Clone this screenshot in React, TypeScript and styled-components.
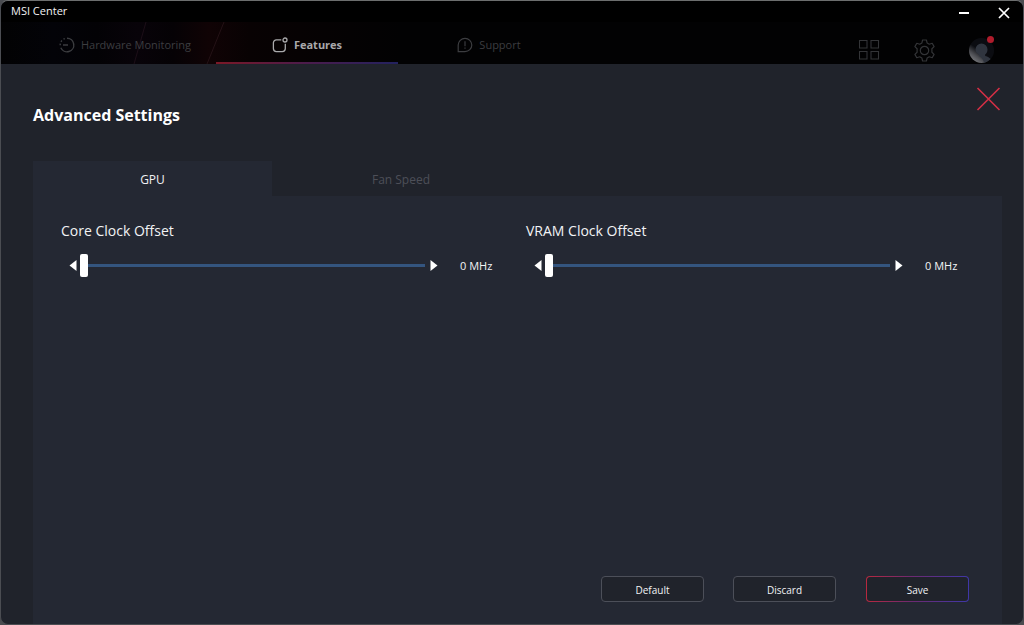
import React, { useState } from "react";
import styled, { createGlobalStyle, css } from "styled-components";

const GlobalStyle = createGlobalStyle`
  *, *::before, *::after { box-sizing: border-box; }
  body { margin: 0; background: #4a4c50; }
  button, input { font: inherit; color: inherit; margin: 0; }
  button { padding: 0; border: 0; background: none; cursor: pointer; }
  svg { display: block; flex: none; }
`;

const Window = styled.div`
  display: flex;
  flex-direction: column;
  min-height: 100vh;
  overflow: hidden;
  border: 1px solid #4b4d52;
  border-top-color: #6c6e6e;
  border-radius: 8px;
  background: #20232b;
  color: #f2f3f5;
  font-family: "Open Sans", "Noto Sans", sans-serif;
  font-size: 11px;
`;

const TitleBar = styled.header`
  display: flex;
  align-items: center;
  justify-content: space-between;
  height: 21px;
  padding: 0 13px 0 10px;
  background: #000;
`;

const AppName = styled.span`
  font-size: 11px;
  line-height: 18px;
  padding-bottom: 2px;
`;

const WindowControls = styled.div`
  display: flex;
  align-items: flex-end;
  gap: 28px;
  padding-top: 3px;
`;

const NavBar = styled.nav`
  position: relative;
  display: flex;
  align-items: stretch;
  justify-content: space-between;
  height: 42px;
  padding: 0 29px 0 33px;
  background: #020203;
`;

const Streaks = styled.svg`
  position: absolute;
  left: 0;
  top: 0;
`;

const NavTabs = styled.div`
  position: relative;
  display: flex;
`;

const NavLink = styled.a<{ $active?: boolean }>`
  display: flex;
  align-items: center;
  justify-content: center;
  gap: 6px;
  width: 182px;
  padding-top: 5px;
  border-bottom: 2px solid transparent;
  color: #3c3d40;
  font-size: 11px;
  line-height: 16px;
  text-decoration: none;
  ${(p) =>
    p.$active &&
    css`
      color: #a9a9ab;
      font-weight: 700;
      border-image: linear-gradient(90deg, #7c1826, #4b1c4c 50%, #22225f) 1;
    `}
`;

const NavTools = styled.div`
  display: flex;
  align-items: center;
  gap: 33px;
  padding-top: 15px;
  color: #333437;
`;

const ToolButton = styled.button`
  position: relative;
`;

const Badge = styled.span`
  position: absolute;
  top: -2px;
  right: 0;
  width: 7px;
  height: 7px;
  border-radius: 50%;
  background: #b01c2c;
`;

const Page = styled.main`
  display: flex;
  flex: 1;
  flex-direction: column;
  padding: 23px 21px 0 32px;
`;

const PageHead = styled.div`
  display: flex;
  align-items: flex-start;
  justify-content: space-between;
  height: 74px;
`;

const Heading = styled.h1`
  margin: 16px 0 0;
  font-size: 16px;
  line-height: 24px;
  font-weight: 700;
  color: #fff;
`;

const Tabs = styled.div`
  display: flex;
`;

const Tab = styled.button<{ $active: boolean; $width: number }>`
  width: ${(p) => p.$width}px;
  height: 35px;
  padding-top: 2px;
  background: ${(p) => (p.$active ? "#242833" : "transparent")};
  color: ${(p) => (p.$active ? "#f0f1f3" : "#4d4f58")};
  font-size: 12px;
`;

const Panel = styled.section`
  display: flex;
  flex: 1;
  flex-direction: column;
  justify-content: space-between;
  padding: 24px 11px 22px 28px;
  background: #242833;
`;

const Settings = styled.div`
  display: grid;
  grid-template-columns: 1fr 1fr;
`;

const SettingLabel = styled.label`
  display: block;
  font-size: 14px;
  line-height: 22px;
`;

const SliderRow = styled.div`
  display: flex;
  align-items: center;
  height: 23px;
  margin-top: 12px;
  padding-left: 8px;
`;

const StepButton = styled.button`
  color: #fff;
`;

const Range = styled.input`
  flex: 1;
  min-width: 0;
  height: 23px;
  margin: 0 5px 0 3px;
  appearance: none;
  background: transparent;

  &::-webkit-slider-runnable-track {
    height: 3px;
    background: #34557f;
  }
  &::-webkit-slider-thumb {
    appearance: none;
    width: 8px;
    height: 23px;
    margin-top: -10px;
    border-radius: 2px;
    background: #fff;
  }
`;

const Value = styled.output`
  width: 66px;
  margin-left: 22px;
  font-size: 11px;
  line-height: 15px;
`;

const Actions = styled.div`
  display: flex;
  justify-content: flex-end;
  gap: 29px;
  padding-right: 22px;
`;

const ActionButton = styled.button<{ $primary?: boolean }>`
  width: 103px;
  height: 26px;
  padding-top: 2px;
  border: 1px solid #4c4f59;
  border-radius: 4px;
  background: #20232b;
  font-size: 10px;
  ${(p) =>
    p.$primary &&
    css`
      margin-left: 1px;
      border-color: transparent;
      background:
        linear-gradient(#20232b, #20232b) padding-box,
        linear-gradient(90deg, #b8283f, #6c2a72 45%, #3f37a8) border-box;
    `}
`;

const Arrow = ({ left }: { left?: boolean }) => (
  <svg width="8" height="11" viewBox="0 0 8 11" fill="currentColor">
    <path d={left ? "M7.5 0v11L.5 5.500z" : "M.5 0v11l7-5.500z"} />
  </svg>
);

function OffsetSetting({ id, label }: { id: string; label: string }) {
  const [value, setValue] = useState(0);
  const step = (d: number) => setValue((v) => Math.min(200, Math.max(0, v + d)));
  return (
    <div>
      <SettingLabel htmlFor={id}>{label}</SettingLabel>
      <SliderRow>
        <StepButton type="button" aria-label={`Decrease ${label}`} onClick={() => step(-1)}>
          <Arrow left />
        </StepButton>
        <Range
          id={id}
          type="range"
          min={0}
          max={200}
          value={value}
          onChange={(e) => setValue(Number(e.target.value))}
        />
        <StepButton type="button" aria-label={`Increase ${label}`} onClick={() => step(1)}>
          <Arrow />
        </StepButton>
        <Value htmlFor={id}>{value} MHz</Value>
      </SliderRow>
    </div>
  );
}

const GaugeIcon = () => (
  <svg width="16" height="16" viewBox="0 0 16 16" fill="none" stroke="currentColor" strokeWidth="1.4">
    <path d="M8 1.200A6.800 6.800 0 1 1 1.800 10.800" />
    <path d="M1.200 8.200A6.800 6.800 0 0 1 6 1.500" strokeDasharray="1.500 2" />
    <path d="M4 8H9" />
  </svg>
);

const FeaturesIcon = () => (
  <svg width="16" height="16" viewBox="0 0 16 16" fill="none" stroke="currentColor" strokeWidth="1.3">
    <path d="M9.300 2.800H4.400a3 3 0 0 0-3 3v5.800a3 3 0 0 0 3 3h5.900a3 3 0 0 0 3-3V6.800" />
    <circle cx="13" cy="3" r="2" />
  </svg>
);

const SupportIcon = () => (
  <svg width="16" height="16" viewBox="0 0 16 16" fill="none" stroke="currentColor" strokeWidth="1.2">
    <path d="M1.200 14.600V8a6.800 6.600 0 1 1 6.800 6.600z" />
    <path d="M8 4.200v5M8 10.400v1.400" />
  </svg>
);

const GridIcon = () => (
  <svg width="21" height="21" viewBox="0 0 21 21" fill="none" stroke="currentColor" strokeWidth="1.1">
    <path d="M.5 .5H8V8H.5zM12 .5h7.500V8H12zM.5 11.500H8V19H.5zM12 11.500h7.500V19H12z" />
  </svg>
);

const GearIcon = () => (
  <svg width="23" height="23" viewBox="0 0 23 23" fill="none" stroke="currentColor" strokeWidth="1.2" strokeLinejoin="round">
    <path d="M9.600 1h3.800l.7 2.900 2.200 1.300 2.900-.9 1.900 3.300-2.200 2.100v3.600l2.200 2.100-1.900 3.300-2.900-.9-2.200 1.300-.7 2.900H9.600l-.7-2.900-2.200-1.300-2.900.9-1.900-3.300 2.200-2.100V9.700l-2.200-2.100 1.900-3.300 2.900.9 2.200-1.300z" />
    <circle cx="11.500" cy="11.500" r="4.200" />
  </svg>
);

const AvatarIcon = () => (
  <svg width="25" height="25" viewBox="0 0 25 25">
    <defs>
      <linearGradient id="avatarShade" x1="0.1" y1="1" x2="0.6" y2="0.3">
        <stop offset="0" stopColor="#8a8b8e" />
        <stop offset="0.4" stopColor="#4a4b50" />
        <stop offset="0.7" stopColor="#0b0c11" />
      </linearGradient>
      <clipPath id="avatarClip">
        <circle cx="12.500" cy="12.500" r="12.500" />
      </clipPath>
    </defs>
    <g clipPath="url(#avatarClip)">
      <rect width="25" height="25" fill="url(#avatarShade)" />
      <path d="M12.500 5.500a6 6 0 0 1 6 6c0 2.500-1 4-2.500 5.200v1.300c2.500.5 4.500 1.500 6 3.500L18 25h-3c-.5-3-2-5.500-5-7v-1.300c-2-1.200-3.500-2.700-3.500-5.200a6 6 0 0 1 6-6z" fill="#30353f" />
    </g>
  </svg>
);

const TABS = [
  { name: "GPU", width: 239 },
  { name: "Fan Speed", width: 258 },
];

export default function App() {
  const [tab, setTab] = useState("GPU");
  return (
    <>
      <GlobalStyle />
      <Window>
        <TitleBar>
          <AppName>MSI Center</AppName>
          <WindowControls>
            <button type="button" aria-label="Minimize">
              <svg width="11" height="12" viewBox="0 0 11 12" stroke="#fff" strokeWidth="2">
                <path d="M0 6h10" />
              </svg>
            </button>
            <button type="button" aria-label="Close window">
              <svg width="12" height="12" viewBox="0 0 12 12" stroke="#fff" strokeWidth="1.700">
                <path d="M1 1l10 10M11 1L1 11" />
              </svg>
            </button>
          </WindowControls>
        </TitleBar>
        <NavBar>
          <Streaks width="400" height="42" viewBox="0 0 400 42" aria-hidden="true">
            <defs>
              <linearGradient id="glow">
                <stop offset="0" stopColor="#020203" />
                <stop offset="0.13" stopColor="#030308" />
                <stop offset="0.24" stopColor="#030205" />
                <stop offset="0.34" stopColor="#080309" />
                <stop offset="0.43" stopColor="#050205" />
                <stop offset="0.52" stopColor="#100305" />
                <stop offset="0.62" stopColor="#080203" />
                <stop offset="1" stopColor="#020203" />
              </linearGradient>
            </defs>
            <rect width="400" height="42" fill="url(#glow)" />
            <path d="M145 0L133 42" stroke="#1c0f18" />
            <path d="M223 0L206 42" stroke="#241216" />
          </Streaks>
          <NavTabs>
            <NavLink href="#hardware"><GaugeIcon />Hardware Monitoring</NavLink>
            <NavLink href="#features" $active aria-current="page"><FeaturesIcon />Features</NavLink>
            <NavLink href="#support"><SupportIcon />Support</NavLink>
          </NavTabs>
          <NavTools>
            <ToolButton type="button" aria-label="Apps"><GridIcon /></ToolButton>
            <ToolButton type="button" aria-label="Settings"><GearIcon /></ToolButton>
            <ToolButton type="button" aria-label="Account"><AvatarIcon /><Badge /></ToolButton>
          </NavTools>
        </NavBar>
        <Page>
          <PageHead>
            <Heading>Advanced Settings</Heading>
            <button type="button" aria-label="Close advanced settings">
              <svg width="27" height="24" viewBox="0 0 27 24" stroke="#d42f45" strokeWidth="1.600">
                <path d="M2.500 1l22 22M24.500 1l-22 22" />
              </svg>
            </button>
          </PageHead>
          <Tabs role="tablist">
            {TABS.map(({ name, width }) => (
              <Tab
                key={name}
                type="button"
                role="tab"
                aria-selected={tab === name}
                $active={tab === name}
                $width={width}
                onClick={() => setTab(name)}
              >
                {name}
              </Tab>
            ))}
          </Tabs>
          <Panel role="tabpanel" aria-label={tab}>
            <Settings>
              <OffsetSetting id="core" label="Core Clock Offset" />
              <OffsetSetting id="vram" label="VRAM Clock Offset" />
            </Settings>
            <Actions>
              <ActionButton type="button">Default</ActionButton>
              <ActionButton type="button">Discard</ActionButton>
              <ActionButton type="button" $primary>Save</ActionButton>
            </Actions>
          </Panel>
        </Page>
      </Window>
    </>
  );
}
